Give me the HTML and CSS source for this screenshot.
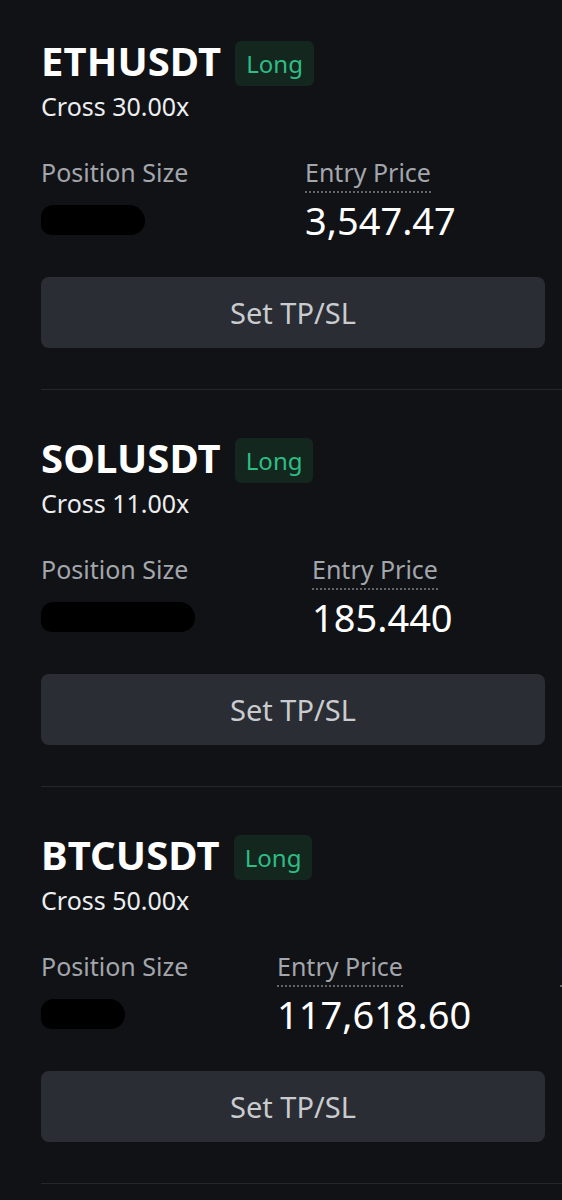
FILE: index.html
```html
<!DOCTYPE html>
<html>
<head>
<meta charset="utf-8">
<link rel="stylesheet" href="styles.css">
</head>
<body>
<div class="list">
  <section class="pos">
    <div class="head">
      <span class="sym">ETHUSDT</span>
      <span class="badge">Long</span>
    </div>
    <div class="lev">Cross 30.00x</div>
    <div class="cols">
      <div class="col col-size col-size--eth">
        <div class="lbl">Position Size</div>
        <div class="val"><span class="redact redact--eth"></span></div>
      </div>
      <div class="col col-entry">
        <div class="lbl dotted">Entry Price</div>
        <div class="val">3,547.47</div>
      </div>
    </div>
    <button class="btn">Set TP/SL</button>
  </section>
  <section class="pos">
    <div class="head">
      <span class="sym">SOLUSDT</span>
      <span class="badge">Long</span>
    </div>
    <div class="lev">Cross 11.00x</div>
    <div class="cols">
      <div class="col col-size col-size--sol">
        <div class="lbl">Position Size</div>
        <div class="val"><span class="redact redact--sol"></span></div>
      </div>
      <div class="col col-entry">
        <div class="lbl dotted">Entry Price</div>
        <div class="val">185.440</div>
      </div>
    </div>
    <button class="btn">Set TP/SL</button>
  </section>
  <section class="pos">
    <div class="head">
      <span class="sym">BTCUSDT</span>
      <span class="badge">Long</span>
    </div>
    <div class="lev">Cross 50.00x</div>
    <div class="cols">
      <div class="col col-size col-size--btc">
        <div class="lbl">Position Size</div>
        <div class="val"><span class="redact redact--btc"></span></div>
      </div>
      <div class="col col-entry">
        <div class="lbl dotted">Entry Price</div>
        <div class="val">117,618.60</div>
      </div>
      <div class="col col-peek">
        <div class="lbl dotted">Mark Price</div>
        <div class="val">117,702.10</div>
      </div>
    </div>
    <button class="btn">Set TP/SL</button>
  </section>
</div>
</body>
</html>
```
FILE: styles.css
```css
* { box-sizing: border-box; }
html, body {
  margin: 0;
  padding: 0;
  background: #111216;
  height: 100%;
  overflow: hidden;
}
body {
  font-family: "Noto Sans", Roboto, "Liberation Sans", sans-serif;
  color: #f2f3f5;
}
.list {
  padding-top: 41px;
}
.pos {
  margin-left: 41px;
  border-bottom: 1px solid #24272c;
  padding-bottom: 41px;
  margin-bottom: 48px;
}
.head {
  display: flex;
  align-items: center;
  gap: 14px;
  height: 45px;
}
.sym {
  font-size: 40px;
  font-weight: 700;
  letter-spacing: 0.1px;
  line-height: 46px;
  padding-bottom: 6px;
  color: #ffffff;
}
.badge {
  height: 45px;
  line-height: 45px;
  padding: 0 11px;
  border-radius: 6px;
  background: #13271f;
  color: #2ebd85;
  font-size: 24px;
}
.lev {
  font-size: 25px;
  line-height: 30px;
  margin-top: 5px;
  color: #eceef0;
}
.cols {
  display: flex;
  margin-top: 36px;
  white-space: nowrap;
}
.col { flex: none; }
.col-size--eth { width: 264px; }
.col-size--sol { width: 271px; }
.col-size--btc { width: 236px; }
.col-entry { width: 283px; }
.lbl {
  font-size: 25px;
  line-height: 30px;
  color: #a3a6ac;
  display: inline-block;
  padding-bottom: 4px;
  border-bottom: 2px solid transparent;
}
.dotted {
  border-bottom: 2px dotted #5f636a;
}
.val {
  font-size: 38px;
  line-height: 44px;
  margin-top: 5px;
  color: #ffffff;
  height: 44px;
  display: flex;
  align-items: center;
}
.redact {
  display: block;
  height: 30px;
  background: #000;
  border-radius: 14px 18px 16px 12px;
}
.redact--eth { width: 104px; }
.redact--sol { width: 154px; }
.redact--btc { width: 84px; }
.btn {
  display: block;
  width: 504px;
  height: 71px;
  margin-top: 35px;
  border: none;
  border-radius: 8px;
  background: #2a2d33;
  color: #c9cbcf;
  font-family: inherit;
  font-size: 29px;
}
```
